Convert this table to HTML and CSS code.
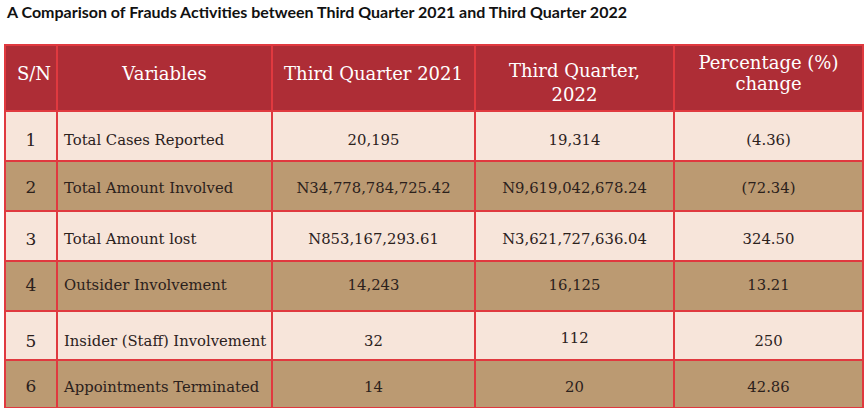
FILE: index.html
```html
<!DOCTYPE html>
<html>
<head>
<meta charset="utf-8">
<link rel="stylesheet" href="styles.css">
</head>
<body>
<div class="page">
  <h1 class="title">A Comparison of Frauds Activities between Third Quarter 2021 and Third Quarter 2022</h1>
  <table class="fraud">
    <colgroup>
      <col class="c-sn">
      <col class="c-var">
      <col class="c-q21">
      <col class="c-q22">
      <col class="c-pct">
    </colgroup>
    <thead>
      <tr>
        <th class="sn">S/N</th>
        <th>Variables</th>
        <th>Third Quarter 2021</th>
        <th class="h-q22">Third Quarter,<br>2022</th>
        <th class="h-pct">Percentage (%)<br>change</th>
      </tr>
    </thead>
    <tbody>
      <tr class="light r1">
        <td class="sn">1</td><td class="var">Total Cases Reported</td><td>20,195</td><td>19,314</td><td>(4.36)</td>
      </tr>
      <tr class="dark r2">
        <td class="sn">2</td><td class="var">Total Amount Involved</td><td>N34,778,784,725.42</td><td>N9,619,042,678.24</td><td>(72.34)</td>
      </tr>
      <tr class="light r3">
        <td class="sn">3</td><td class="var">Total Amount lost</td><td>N853,167,293.61</td><td>N3,621,727,636.04</td><td>324.50</td>
      </tr>
      <tr class="dark r4">
        <td class="sn">4</td><td class="var">Outsider Involvement</td><td>14,243</td><td>16,125</td><td>13.21</td>
      </tr>
      <tr class="light r5">
        <td class="sn">5</td><td class="var">Insider (Staff) Involvement</td><td>32</td><td class="up">112</td><td>250</td>
      </tr>
      <tr class="dark r6">
        <td class="sn">6</td><td class="var">Appointments Terminated</td><td>14</td><td>20</td><td>42.86</td>
      </tr>
    </tbody>
  </table>
</div>
</body>
</html>
```

FILE: styles.css
```css
html, body {
  margin: 0;
  padding: 0;
  background: #ffffff;
}
.page {
  padding: 3px 0 0 4px;
}
.title {
  margin: 0 0 0 3px;
  font-family: Lato, "Noto Sans", sans-serif;
  font-weight: 700;
  font-size: 16px;
  line-height: 18px;
  color: #111111;
}
.fraud {
  margin-top: 23px;
  border-collapse: collapse;
  table-layout: fixed;
  width: 858px;
  font-family: "DejaVu Serif", "Liberation Serif", serif;
  color: #2b211c;
}
.c-sn { width: 52px; }
.c-var { width: 215px; }
.c-q21 { width: 203px; }
.c-q22 { width: 199px; }
.c-pct { width: 189px; }
.fraud th, .fraud td {
  border: 2px solid #e0393f;
  text-align: center;
  vertical-align: middle;
  padding: 0;
}
.fraud th {
  background: #ae2d36;
  color: #ffffff;
  font-weight: 400;
  font-size: 18px;
  line-height: 23px;
  height: 54px;
  padding: 0 0 10px;
}
.fraud td {
  font-size: 14.8px;
}
.fraud td.sn {
  font-size: 17px;
}
.fraud td.var {
  text-align: left;
  padding-left: 6px;
}
.fraud th.sn {
  padding-left: 6px;
}
.fraud .h-q22 {
  padding: 10px 0 0;
  line-height: 24px;
}
.fraud .h-pct {
  line-height: 21px;
}
.r1 td { height: 41px; padding-top: 7px; }
.r2 td { height: 46px; padding-top: 2px; }
.r3 td { height: 43px; padding-top: 5px; }
.r4 td { height: 45px; padding-bottom: 3px; }
.r5 td { height: 37px; padding-top: 10px; }
.r5 td.up { padding-top: 4px; }
.r6 td { height: 42px; padding-top: 4px; }
.light td { background: #f7e5da; }
.dark td { background: #bb9a72; }
```
